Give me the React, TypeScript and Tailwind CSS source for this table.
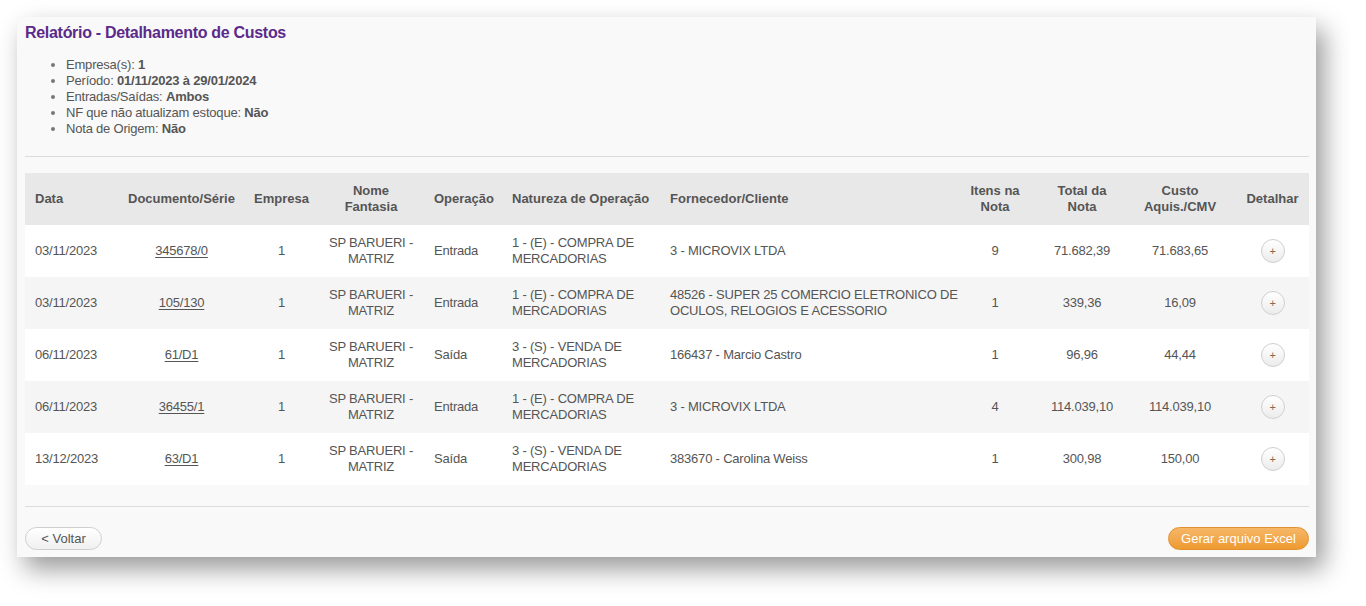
import { Fragment } from 'react';

type Row = {
  data: string;
  doc: string;
  empresa: string;
  operacao: string;
  natureza: string[];
  fornecedor: string[];
  itens: string;
  total: string;
  custo: string;
};

const rows: Row[] = [
  { data: '03/11/2023', doc: '345678/0', empresa: '1', operacao: 'Entrada', natureza: ['1 - (E) - COMPRA DE', 'MERCADORIAS'], fornecedor: ['3 - MICROVIX LTDA'], itens: '9', total: '71.682,39', custo: '71.683,65' },
  { data: '03/11/2023', doc: '105/130', empresa: '1', operacao: 'Entrada', natureza: ['1 - (E) - COMPRA DE', 'MERCADORIAS'], fornecedor: ['48526 - SUPER 25 COMERCIO ELETRONICO DE', 'OCULOS, RELOGIOS E ACESSORIO'], itens: '1', total: '339,36', custo: '16,09' },
  { data: '06/11/2023', doc: '61/D1', empresa: '1', operacao: 'Saída', natureza: ['3 - (S) - VENDA DE', 'MERCADORIAS'], fornecedor: ['166437 - Marcio Castro'], itens: '1', total: '96,96', custo: '44,44' },
  { data: '06/11/2023', doc: '36455/1', empresa: '1', operacao: 'Entrada', natureza: ['1 - (E) - COMPRA DE', 'MERCADORIAS'], fornecedor: ['3 - MICROVIX LTDA'], itens: '4', total: '114.039,10', custo: '114.039,10' },
  { data: '13/12/2023', doc: '63/D1', empresa: '1', operacao: 'Saída', natureza: ['3 - (S) - VENDA DE', 'MERCADORIAS'], fornecedor: ['383670 - Carolina Weiss'], itens: '1', total: '300,98', custo: '150,00' },
];

const filtros: [string, string][] = [
  ['Empresa(s): ', '1'],
  ['Período: ', '01/11/2023 à 29/01/2024'],
  ['Entradas/Saídas: ', 'Ambos'],
  ['NF que não atualizam estoque: ', 'Não'],
  ['Nota de Origem: ', 'Não'],
];

function Lines({ lines }: { lines: string[] }) {
  return (
    <>
      {lines.map((l, k) => (
        <Fragment key={k}>
          {k > 0 && <br />}
          {l}
        </Fragment>
      ))}
    </>
  );
}

export default function App() {
  return (
    <div className="min-h-[606px] bg-white pl-[17px] pt-[17px] font-['Liberation_Sans',Arial,sans-serif] text-[#555]">
      <div className="w-[1299px] h-[540px] bg-[#f9f9f9] pl-[8px] pr-[7px] pt-[8px] shadow-[8px_12px_24px_rgba(0,0,0,0.4)] flex flex-col">
        <h1 className="text-[16px] leading-[16px] font-bold text-[#5b2a8a] tracking-[-0.3px]">
          Relatório - Detalhamento de Custos
        </h1>

        {/* filtros aplicados */}
        <ul className="mt-[16px] pl-[41px] list-disc marker:text-[#777] text-[13px] leading-[16px] tracking-[-0.2px]">
          {filtros.map(([label, valor]) => (
            <li key={label}>
              {label}
              <b className="text-[#555]">{valor}</b>
            </li>
          ))}
        </ul>

        <div className="mt-[19px] h-px bg-[#dcdcdc]" />

        <table className="mt-[16px] w-[1284px] table-fixed border-collapse text-[13px] leading-[16px] tracking-[-0.2px]">
          <colgroup>
            <col className="w-[93px]" />
            <col className="w-[127px]" />
            <col className="w-[73px]" />
            <col className="w-[106px]" />
            <col className="w-[78px]" />
            <col className="w-[158px]" />
            <col className="w-[290px]" />
            <col className="w-[90px]" />
            <col className="w-[84px]" />
            <col className="w-[112px]" />
            <col className="w-[73px]" />
          </colgroup>
          <thead>
            <tr className="h-[52px] bg-[#e8e8e8] font-bold text-[#555] tracking-normal">
              <th className="px-[10px] text-left">Data</th>
              <th className="px-[6px] text-center">Documento/Série</th>
              <th className="px-[6px] text-center">Empresa</th>
              <th className="px-[10px] text-center">
                Nome
                <br />
                Fantasia
              </th>
              <th className="pl-[10px] pr-[4px] text-left">Operação</th>
              <th className="px-[10px] text-left">Natureza de Operação</th>
              <th className="px-[10px] text-left">Fornecedor/Cliente</th>
              <th className="px-[10px] text-center">
                Itens na
                <br />
                Nota
              </th>
              <th className="px-[10px] text-center">
                Total da
                <br />
                Nota
              </th>
              <th className="px-[10px] text-center">
                Custo
                <br />
                Aquis./CMV
              </th>
              <th className="px-[6px] text-center">Detalhar</th>
            </tr>
          </thead>
          <tbody>
            {rows.map((r, i) => (
              <tr key={i} className={`h-[52px] ${i % 2 === 1 ? 'bg-[#f5f5f5]' : 'bg-white'}`}>
                <td className="px-[10px]">{r.data}</td>
                <td className="px-[10px] text-center">
                  <a className="underline underline-offset-2 cursor-pointer">{r.doc}</a>
                </td>
                <td className="px-[10px] text-center">{r.empresa}</td>
                <td className="px-[4px] text-center whitespace-nowrap">
                  SP BARUERI -
                  <br />
                  MATRIZ
                </td>
                <td className="px-[10px]">{r.operacao}</td>
                <td className="px-[10px] whitespace-nowrap">
                  <Lines lines={r.natureza} />
                </td>
                <td className="px-[10px] whitespace-nowrap">
                  <Lines lines={r.fornecedor} />
                </td>
                <td className="px-[10px] text-center">{r.itens}</td>
                <td className="px-[10px] text-center">{r.total}</td>
                <td className="px-[10px] text-center">{r.custo}</td>
                <td className="px-[6px]">
                  <button className="mx-auto flex h-[24px] w-[24px] items-center justify-center rounded-full border border-[#cfcfcf] bg-gradient-to-b from-white to-[#ececec] text-[11px] leading-none text-[#8a6a4a]">
                    +
                  </button>
                </td>
              </tr>
            ))}
          </tbody>
        </table>

        <div className="mt-[21px] h-px bg-[#dcdcdc]" />

        <div className="mt-[20px] flex items-center justify-between">
          <button className="h-[23px] w-[77px] rounded-full border border-[#cfcfcf] bg-gradient-to-b from-white to-[#f0f0f0] text-[13px] text-[#555]">
            &lt; Voltar
          </button>
          <button className="h-[23px] w-[141px] rounded-full border border-[#e09030] bg-gradient-to-b from-[#f6b766] to-[#ee9a2e] text-[13px] text-white">
            Gerar arquivo Excel
          </button>
        </div>
      </div>
    </div>
  );
}
